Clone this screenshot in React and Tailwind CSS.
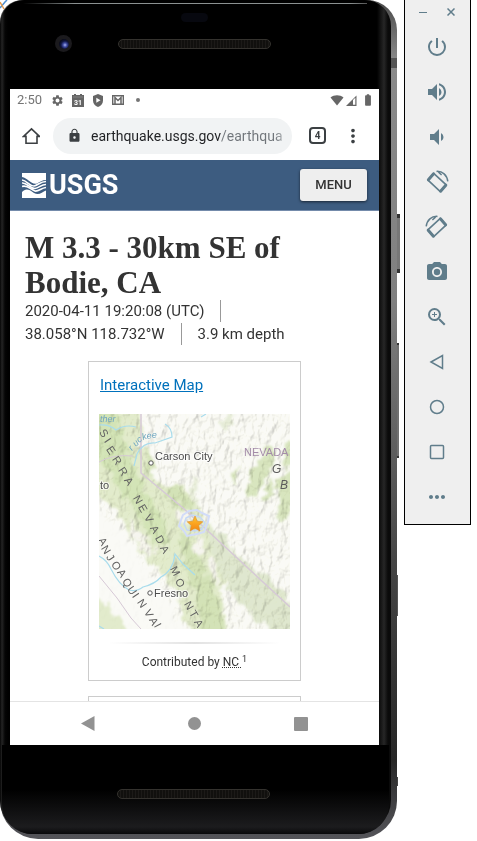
import React from "react";
import {
  MdPowerSettingsNew,
  MdVolumeUp,
  MdVolumeDown,
  MdPhotoCamera,
  MdZoomIn,
  MdMoreHoriz,
  MdSettings,
  MdLock,
  MdMoreVert,
  MdBatteryFull,
} from "react-icons/md";

const ROBOTO = "font-['Roboto','Liberation_Sans',sans-serif]";

// Letters of a range name, each placed at its centre and turned to follow the terrain.
function spread(points, angle) {
  const a = (angle * Math.PI) / 180;
  const dx = 3.5 * Math.cos(a) + 4 * Math.sin(a);
  const dy = 3.5 * Math.sin(a) - 4 * Math.cos(a);
  return {
    x: points.map((p) => (p[0] - dx).toFixed(1)).join(" "),
    y: points.map((p) => (p[1] - dy).toFixed(1)).join(" "),
    rotate: angle,
  };
}

const RANGES = [
  { text: "SIERRA", ...spread([[5, 19], [10, 28], [12, 36], [18, 46], [24, 57], [30, 67]], 56) },
  { text: "NEVADA", ...spread([[39, 85], [44, 94], [50, 104], [56, 115], [61, 125], [66, 135]], 60) },
  { text: "MO", ...spread([[76, 156], [81, 168]], 62) },
  { text: "NTA", ...spread([[90, 191], [95, 200], [100, 209]], 60) },
  { text: "AN", ...spread([[4, 127], [7, 135]], 58) },
  { text: "JOAQUIN", ...spread([[12, 144], [17, 151], [23, 159], [28, 168], [33, 176], [38, 183], [43, 189]], 56) },
  { text: "VAI", ...spread([[50, 199], [55, 207], [60, 213]], 62) },
];

function TerrainMap() {
  return (
    <svg viewBox="0 0 191 215" className="block h-auto w-full" role="img" aria-label="Map of the epicenter">
      <defs>
        <filter id="relief" x="0" y="0" width="100%" height="100%">
          <feTurbulence type="fractalNoise" baseFrequency="0.13 0.08" numOctaves="4" seed="11" />
          <feDiffuseLighting surfaceScale="3" diffuseConstant="1.13" lightingColor="#fffffa">
            <feDistantLight azimuth="225" elevation="64" />
          </feDiffuseLighting>
        </filter>
        <filter id="edges" x="-10%" y="-10%" width="120%" height="120%">
          <feTurbulence type="fractalNoise" baseFrequency="0.11" numOctaves="4" seed="4" result="n" />
          <feDisplacementMap in="SourceGraphic" in2="n" scale="16" xChannelSelector="R" yChannelSelector="G" />
          <feGaussianBlur stdDeviation="1" />
        </filter>
        <linearGradient id="star" x1="0" y1="0" x2="0" y2="1">
          <stop offset="0" stopColor="#ffc431" />
          <stop offset="1" stopColor="#f58410" />
        </linearGradient>
        <mask id="hills">
          <rect width="191" height="215" fill="#a0a0a0" />
          <path d="M-5 92 L22 115 L50 158 L72 188 L84 220 L-5 220Z" fill="#111" filter="url(#edges)" />
        </mask>
      </defs>
      <rect width="191" height="215" fill="#fafaf6" />
      <g filter="url(#edges)">
        <path d="M-5 -5 H40 L44 30 L50 38 L53 64 L70 74 L84 70 L100 95 L110 112 L122 128 L126 160 L122 185 L128 220 H90 L82 192 L66 162 L48 145 L32 122 L14 92 L-5 76Z" fill="#e2ebcc" />
        <path d="M-5 -5 H14 L28 34 L44 72 L64 108 L70 128 L56 132 L38 100 L18 70 L-5 40Z" fill="#cfe2b2" opacity=".8" />
        <path d="M46 36 L53 40 L54 62 L48 58Z M62 76 L82 72 L96 92 L84 94 L74 88Z M78 118 L96 128 L104 150 L120 190 L124 220 H108 L98 190 L86 150Z" fill="#cfe0b2" opacity=".8" />
        <path d="M106 114 L124 122 L144 148 L172 164 L196 194 V220 H178 L150 198 L132 180 L122 160Z" fill="#dfe7cf" />
        <path d="M150 58 L160 46 L172 28 L178 40 L168 62 L158 82 L150 84Z M177 72 L184 60 L196 52 V84 L186 108 L176 106 L180 88Z M168 68 L176 66 L172 84 L164 86Z M132 60 L140 56 L138 70 L132 70Z M186 30 L196 25 V48 L184 56Z" fill="#d8e5bf" />
        <path d="M118 8 L132 0 L138 4 L124 18Z M90 62 L96 64 L100 90 L93 84Z" fill="#e6ecd8" />
        <path d="M-5 184 L8 190 L18 204 L32 220 H-5Z" fill="#e2ebcc" />
        <path d="M76 98 L90 95 L94 108 L80 108Z M92 126 L104 124 L106 140 L94 138Z M108 135 L116 150 L122 176 L113 160Z M28 104 L40 118 L56 140 L50 142 L34 122Z" fill="#f6f5ef" />
      </g>
      <g mask="url(#hills)" className="mix-blend-multiply">
        <rect width="191" height="215" filter="url(#relief)" />
      </g>
      <g fill="none" stroke="#d6c9d6" strokeWidth="1.5">
        <path d="M42 0 V59 L84 94 L191 193" />
        <path d="M0 48 Q14 40 34 42 M0 162 L18 184 L32 204 L42 215" strokeWidth="1" />
      </g>
      <g fill="none" stroke="#a9dcec" strokeWidth="1.2">
        <path d="M0 142 Q8 146 12 155 Q20 171 30 176 Q38 178 44 173 Q56 170 62 163 Q74 157 76 140 L84 150 L96 161" />
        <path d="M66 10 Q73 14 73 23 L56 29 Q44 28 38 40 L35 52 M0 11 Q10 10 17 16 Q26 10 37 13 M102 3 L107 0 M0 212 L5 215" />
      </g>
      <g className="font-['Liberation_Sans',Arial,sans-serif]">
        <g fontSize="9" fontStyle="italic" fill="#6fa6c0">
          <text x="1" y="8">ther</text>
          <text x="33 37 40 44 48 53" y="37 33 29 26 25 24" rotate="-50 -45 -35 -18 -8 -4">ruckee</text>
        </g>
        <g fontSize="11" fill="#626262">
          {RANGES.map((r) => (
            <text key={r.text} x={r.x} y={r.y} rotate={r.rotate}>
              {r.text}
            </text>
          ))}
        </g>
        <g fontSize="11" fill="#4c4c4c" stroke="#ffffff" strokeWidth="2" strokeOpacity=".7" paintOrder="stroke">
          <text x="56" y="46">Carson City</text>
          <text x="55" y="183">Fresno</text>
          <text x="1" y="75">to</text>
        </g>
        <text x="145" y="42" fontSize="11" fill="#a48ca9">NEVADA</text>
        <g fontSize="12" fontStyle="italic" fill="#5c5c5c">
          <text x="173" y="59">G</text>
          <text x="181" y="75">B</text>
        </g>
      </g>
      <g fill="#ffffff" stroke="#555555" strokeWidth="1">
        <circle cx="52" cy="49" r="2.2" />
        <circle cx="51" cy="179" r="2.2" />
      </g>
      <g fill="none" stroke="#d2dcf8">
        <path d="M84 101 L90 97 L98 96 L103 99 L110 102 L109 108 L107 113 L105 118 L98 120 L88 122 L85 117 L80 112 L82 106Z" strokeWidth="2" />
        <path d="M87 104 L93 101 L101 103 L106 109 L103 115 L96 117 L88 116 L85 110Z" strokeWidth="1.5" stroke="#c6d8f5" />
      </g>
      <path d="M96 102 L98.3 107.2 L103.8 107.8 L99.7 111.5 L100.9 117 L96 114.2 L91.1 117 L92.3 111.5 L88.2 107.8 L93.7 107.2Z" fill="url(#star)" stroke="#d9902c" strokeWidth=".6" />
    </svg>
  );
}

function Speaker() {
  return (
    <div className="h-[10px] w-[153px] rounded-full border border-[#34322e] bg-[repeating-linear-gradient(90deg,#11100e_0px,#11100e_2px,#1c1a18_2px,#1c1a18_3px)]" />
  );
}

function StatusBar() {
  return (
    <div className="flex h-[22px] items-center bg-white pl-[7px] pr-1 text-[#757575]">
      <span className="w-[34px] text-[13px] leading-4">2:50</span>
      <div className="flex items-center gap-2">
        <MdSettings className="size-[13px] text-[#666]" />
        <svg viewBox="0 0 12 13" className="h-[13px] w-3">
          <path d="M0 1h2V0h2v1h4V0h2v1h2v12H0z" fill="#666" />
          <path d="M1 3h10" stroke="#999" strokeWidth=".6" />
          <text x="6" y="10.5" fontSize="7" fontWeight="700" textAnchor="middle" fill="#fff">31</text>
        </svg>
        <svg viewBox="0 0 12 13" className="h-[13px] w-3">
          <path d="M6 0l5 2v4.500c0 3-2 5.400-5 6.500-3-1.100-5-3.500-5-6.500V2z" fill="#666" />
          <path d="M4.300 3.700v5L8.500 6.200z" fill="#fff" />
        </svg>
        <svg viewBox="0 0 12 10" className="h-[10px] w-3" fill="none" stroke="#666">
          <path d="M.7.700h10.600v8.600H.7z" strokeWidth="1.400" />
          <path d="M3 9V2.500L6 5.500l3-3V9" strokeWidth="1.500" />
        </svg>
        <span className="mx-1 size-1 rounded-full bg-[#757575]" />
      </div>
      <div className="ml-auto flex items-center">
        <svg viewBox="0 0 14 12" className="mr-px h-3 w-[14px]">
          <path d="M7 11.500L.5 3.500C4 .500 10 .500 13.500 3.500z" fill="#666" />
        </svg>
        <svg viewBox="0 0 12 12" className="mr-1 h-3 w-3">
          <path d="M1 12L11.500 1.500V12z" fill="#666" />
          <path d="M8 6l2.300-2.300v7.100H8z" fill="#fff" />
        </svg>
        <MdBatteryFull className="size-[14px] text-[#666]" />
      </div>
    </div>
  );
}

function AddressBar() {
  return (
    <div className="flex h-[49px] items-center bg-white pl-[12px] text-[#3c4043]">
      <button aria-label="Home" className="mr-[13px] block">
        <svg viewBox="0 0 18 18" className="size-[18px]" fill="none" stroke="currentColor" strokeWidth="1.6">
          <path d="M4 8.500v7.700h11V8.500M4 9.500H1.500L9.500 1.800l8 7.700H15" />
        </svg>
      </button>
      <label className="flex h-9 min-w-0 flex-1 items-center rounded-full bg-[#f1f3f4] pl-[14px] pr-2">
        <MdLock className="mr-[9px] size-[15px] shrink-0" />
        <span className="sr-only">Address</span>
        <input
          type="text"
          defaultValue="earthquake.usgs.gov/earthqua"
          className="min-w-0 flex-1 bg-[linear-gradient(to_right,#202124_130px,#70757a_130px,#70757a_184px,transparent_200px)] bg-clip-text text-[14px] leading-6 text-transparent outline-none"
        />
      </label>
      <button aria-label="Tabs" className="ml-[17px] grid size-[17px] place-items-center rounded-[4px] border-2 border-[#3c4043] text-[10px] font-bold leading-3">
        4
      </button>
      <button aria-label="More" className="ml-4 mr-[15px] block">
        <MdMoreVert className="size-[22px]" />
      </button>
    </div>
  );
}

function SiteHeader() {
  return (
    <header className="flex h-[51px] items-center justify-between border-b border-[#748bab] bg-[#3d5c80] px-3">
      <a href="#home" className="flex items-center gap-[3px] text-white">
        <svg viewBox="0 0 24 25" className="h-[25px] w-6">
          <path d="M0 0h24v7c-4 0-6 2-9 3.500C9 12 6 5 0 4z" fill="#fff" />
          <g fill="none" stroke="#fff" strokeWidth="1.700">
            <path d="M0 7c5 .500 7 6 12 6 4-.500 6-4.500 12-4.500" />
            <path d="M0 10c5-.500 8 5.500 13 5.500 4-.500 6-4 11-4" />
            <path d="M0 13.500c5-2 8 2.500 13 4.500 4 .500 6-3 11-3.500" />
          </g>
          <path d="M0 19c3-3 6-4 12 1 5 3 8-1 12-2.500V25H0z" fill="#fff" />
        </svg>
        <span className="text-[27px] font-bold leading-8">USGS</span>
      </a>
      <button className="h-8 w-[67px] rounded-[3px] bg-[#eeeeee] text-[13px] font-medium text-[#333] shadow-[0_1px_3px_rgba(0,0,0,0.6)]">
        MENU
      </button>
    </header>
  );
}

function EventPage() {
  return (
    <main className="h-[490px] overflow-hidden bg-white px-[15px] pt-[19px] text-[#333]">
      <h1 className="font-['Liberation_Serif',serif] text-[31px] font-bold leading-[35px]">
        M 3.3 - 30km SE of Bodie, CA
      </h1>
      <ul className="flex flex-wrap gap-x-4 gap-y-px text-[15px] leading-[22px]">
        <li className="border-r border-[#999] pr-4">2020-04-11 19:20:08 (UTC)</li>
        <li className="border-r border-[#999] pr-4">38.058°N 118.732°W</li>
        <li>3.9 km depth</li>
      </ul>
      <section className="mx-auto mt-4 h-[320px] w-[213px] border border-[#ccc] px-[10px] pt-3">
        <a href="#map" className="block pl-px text-[15px] leading-[22px] text-[#0071bc] underline">
          Interactive Map
        </a>
        <div className="mt-[18px]">
          <TerrainMap />
        </div>
        <div className="mt-[13px] h-0.5 bg-[linear-gradient(to_right,transparent_5%,#e2e2e2_50%,transparent_95%)]" />
        <p className="mt-[10px] text-center text-[12px] leading-4">
          Contributed by <abbr title="Northern California Seismic System" className="underline decoration-dotted">NC </abbr>
          <sup className="text-[9px]">1</sup>
        </p>
      </section>
      <section className="mx-auto mt-[15px] h-10 w-[213px] border border-[#ccc]" />
    </main>
  );
}

function NavBar() {
  return (
    <nav className="flex h-[44px] items-center justify-around border-t border-[#e4e4e4] bg-white px-6 text-[#929292]">
      <button aria-label="Back">
        <svg viewBox="0 0 14 15" className="h-[15px] w-[14px]"><path d="M0 7.500L13.500 0v15z" fill="currentColor" /></svg>
      </button>
      <button aria-label="Home" className="size-[13px] rounded-full bg-current" />
      <button aria-label="Recents" className="size-[14px] rounded-[1px] bg-current" />
    </nav>
  );
}

function Phone() {
  return (
    <div className="relative mr-[7px] min-w-0 flex-1">
      <svg viewBox="0 0 16 16" className="absolute left-0 top-0 size-4" fill="none">
        <path d="M0 8L5 2l2-2" stroke="#4f8fd0" strokeWidth="1.500" />
        <path d="M0 2l4 7" stroke="#e39a4e" strokeWidth="1.500" />
      </svg>
      <div className="absolute -right-[3px] top-[214px] h-[59px] w-1 border-y-4 border-[#333] bg-[#777]" />
      <div className="absolute -right-0.5 top-[343px] h-[115px] w-1 border-y-2 border-[#333] bg-[#707070]" />
      <div className="absolute -right-px top-[575px] h-[41px] w-1 bg-[#555]" />
      <div className="absolute -right-px top-[777px] h-[9px] w-1 bg-[#444]" />
      <div className="relative rounded-b-[38px] rounded-tl-[22px] rounded-tr-[30px] bg-[linear-gradient(to_bottom,#4a4a4a_0px,#8a8a8a_60px,#808080_300px,#454545_560px,#262626_760px,#55555a_839px)] pb-[5px] pr-[6px]">
        <div className="absolute right-0 top-[58px] h-[10px] w-[6px] bg-[#555]" />
        <div className="rounded-b-[34px] rounded-tl-[24px] rounded-tr-[26px] bg-[linear-gradient(to_right,#050505_0px,#242424_2px,#050505_5px,#000_8px,#000_377px,#262626_384px,#0a0a0a_388px)] pl-[10px] pr-3">
          <div className="flex h-[89px] flex-col items-center pt-[3px]">
            <div className="h-px w-[344px] bg-[linear-gradient(to_right,transparent,#8b9191_15%,#8b9191_95%,#555)]" />
            <div className="mt-[9px] h-[9px] w-[27px] rounded-full bg-[#07080f]" />
            <div className="mt-[13px] grid w-full grid-cols-[1fr_auto_1fr] items-center">
              <div className="ml-[45px] grid size-[17px] place-items-center rounded-full bg-[#1b1a1d]">
                <div className="size-[10px] rounded-full bg-[radial-gradient(circle_at_60%_60%,#a9b4f4_0px,#3d49a0_2px,#10163f_4px,#080a18_6px)]" />
              </div>
              <Speaker />
            </div>
          </div>
          <StatusBar />
          <AddressBar />
          <SiteHeader />
          <EventPage />
          <NavBar />
          <div className="-ml-2 -mr-2.5 flex h-[89px] justify-center rounded-b-[30px] bg-[linear-gradient(to_bottom,#000_50%,#1c1c1e_92%,#08080a)] pr-1 pt-[44px]">
            <Speaker />
          </div>
        </div>
      </div>
    </div>
  );
}

function RotateIcon({ flip }) {
  return (
    <svg viewBox="0 0 24 24" className={flip ? "size-6 -scale-x-100" : "size-6"} fill="none" stroke="currentColor">
      <path d="M8.700 3.300L21.200 14.800 15.300 21.600 3 10.200z" strokeWidth="1.600" strokeLinejoin="round" />
      <path d="M8.600 3.800L3.400 9.800M20.800 15.200l-5.200 6" strokeWidth="3" strokeLinecap="round" />
      <path d="M11.500 1.400c6-.400 10.500 3.600 11.300 10M13 1.600l3.600 3.400" strokeWidth="1.500" />
    </svg>
  );
}

const TOOLS = [
  ["Power", <MdPowerSettingsNew className="size-6" />],
  ["Volume up", <MdVolumeUp className="size-6" />],
  ["Volume down", <MdVolumeDown className="size-6" />],
  ["Rotate left", <RotateIcon />],
  ["Rotate right", <RotateIcon flip />],
  ["Take screenshot", <MdPhotoCamera className="size-6" />],
  ["Zoom", <MdZoomIn className="size-6" />],
  ["Back", <svg viewBox="0 0 24 24" className="size-6" fill="none" stroke="currentColor" strokeWidth="1.500"><path d="M6 12L17.500 5.500v13z" /></svg>],
  ["Home", <svg viewBox="0 0 24 24" className="size-6" fill="none" stroke="currentColor" strokeWidth="1.500"><circle cx="12" cy="12" r="6.500" /></svg>],
  ["Overview", <svg viewBox="0 0 24 24" className="size-6" fill="none" stroke="currentColor" strokeWidth="1.500"><rect x="5.500" y="5.500" width="13" height="13" rx="1" /></svg>],
  ["More", <MdMoreHoriz className="size-6" />],
];

function Toolbar() {
  return (
    <aside className="mr-[6px] w-[67px] shrink-0 border border-t-0 border-black bg-[#efefef] pb-[5px] pr-px text-[#607d8b]">
      <div className="flex h-6 items-center justify-between px-[14px]">
        <button aria-label="Minimize" className="grid h-4 w-2 place-items-center">
          <span className="h-px w-2 bg-current" />
        </button>
        <button aria-label="Close">
          <svg viewBox="0 0 8 8" className="size-2" stroke="currentColor" strokeWidth="1.500"><path d="M.500 .500l7 7M7.500 .500l-7 7" /></svg>
        </button>
      </div>
      {TOOLS.map(([name, icon]) => (
        <button key={name} aria-label={name} className="grid h-[45px] w-full place-items-center">
          {icon}
        </button>
      ))}
    </aside>
  );
}

export default function App() {
  return (
    <div className={`flex min-h-screen items-start overflow-hidden bg-white ${ROBOTO}`}>
      <Phone />
      <Toolbar />
    </div>
  );
}
